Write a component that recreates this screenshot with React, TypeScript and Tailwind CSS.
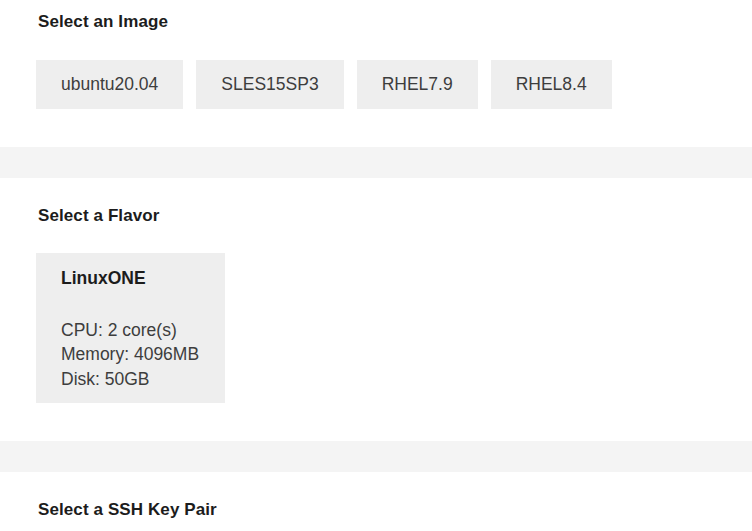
import React from "react";

const images = ["ubuntu20.04", "SLES15SP3", "RHEL7.9", "RHEL8.4"];

function Heading({ children }: { children: React.ReactNode }) {
  return (
    <h2 className="text-[17px] leading-[24px] font-bold text-[#1c1c1c] tracking-[0.1px]">{children}</h2>
  );
}

export default function App() {
  return (
    <div
      className="w-[752px] h-[531px] overflow-hidden bg-white"
      style={{ fontFamily: '"Liberation Sans", Arial, sans-serif' }}
    >
      <section className="pl-[38px] pt-[10px] pb-[38px]">
        <Heading>Select an Image</Heading>
        <div className="mt-[26px] -ml-[2px] flex gap-[13px]">
          {images.map((img) => (
            <div
              key={img}
              className="h-[49px] px-[25px] flex items-center bg-[#eeeeee] text-[17.5px] text-[#3d3d3d]"
            >
              {img}
            </div>
          ))}
        </div>
      </section>
      <div className="h-[31px] bg-[#f4f4f4]" />
      <section className="pl-[38px] pt-[26px] pb-[38px]">
        <Heading>Select a Flavor</Heading>
        <div className="mt-[25px] -ml-[2px] inline-flex flex-col bg-[#eeeeee] pl-[25px] pr-[26px] pt-[13px] pb-[12px] text-[17.5px] leading-[24.5px]">
          <div className="font-bold text-[#1c1c1c]">LinuxONE</div>
          <div className="mt-[27px] text-[#3d3d3d]">
            <div>CPU: 2 core(s)</div>
            <div>Memory: 4096MB</div>
            <div>Disk: 50GB</div>
          </div>
        </div>
      </section>
      <div className="h-[31px] bg-[#f4f4f4]" />
      <section className="pl-[38px] pt-[26px] pb-[38px]">
        <Heading>Select a SSH Key Pair</Heading>
      </section>
    </div>
  );
}
